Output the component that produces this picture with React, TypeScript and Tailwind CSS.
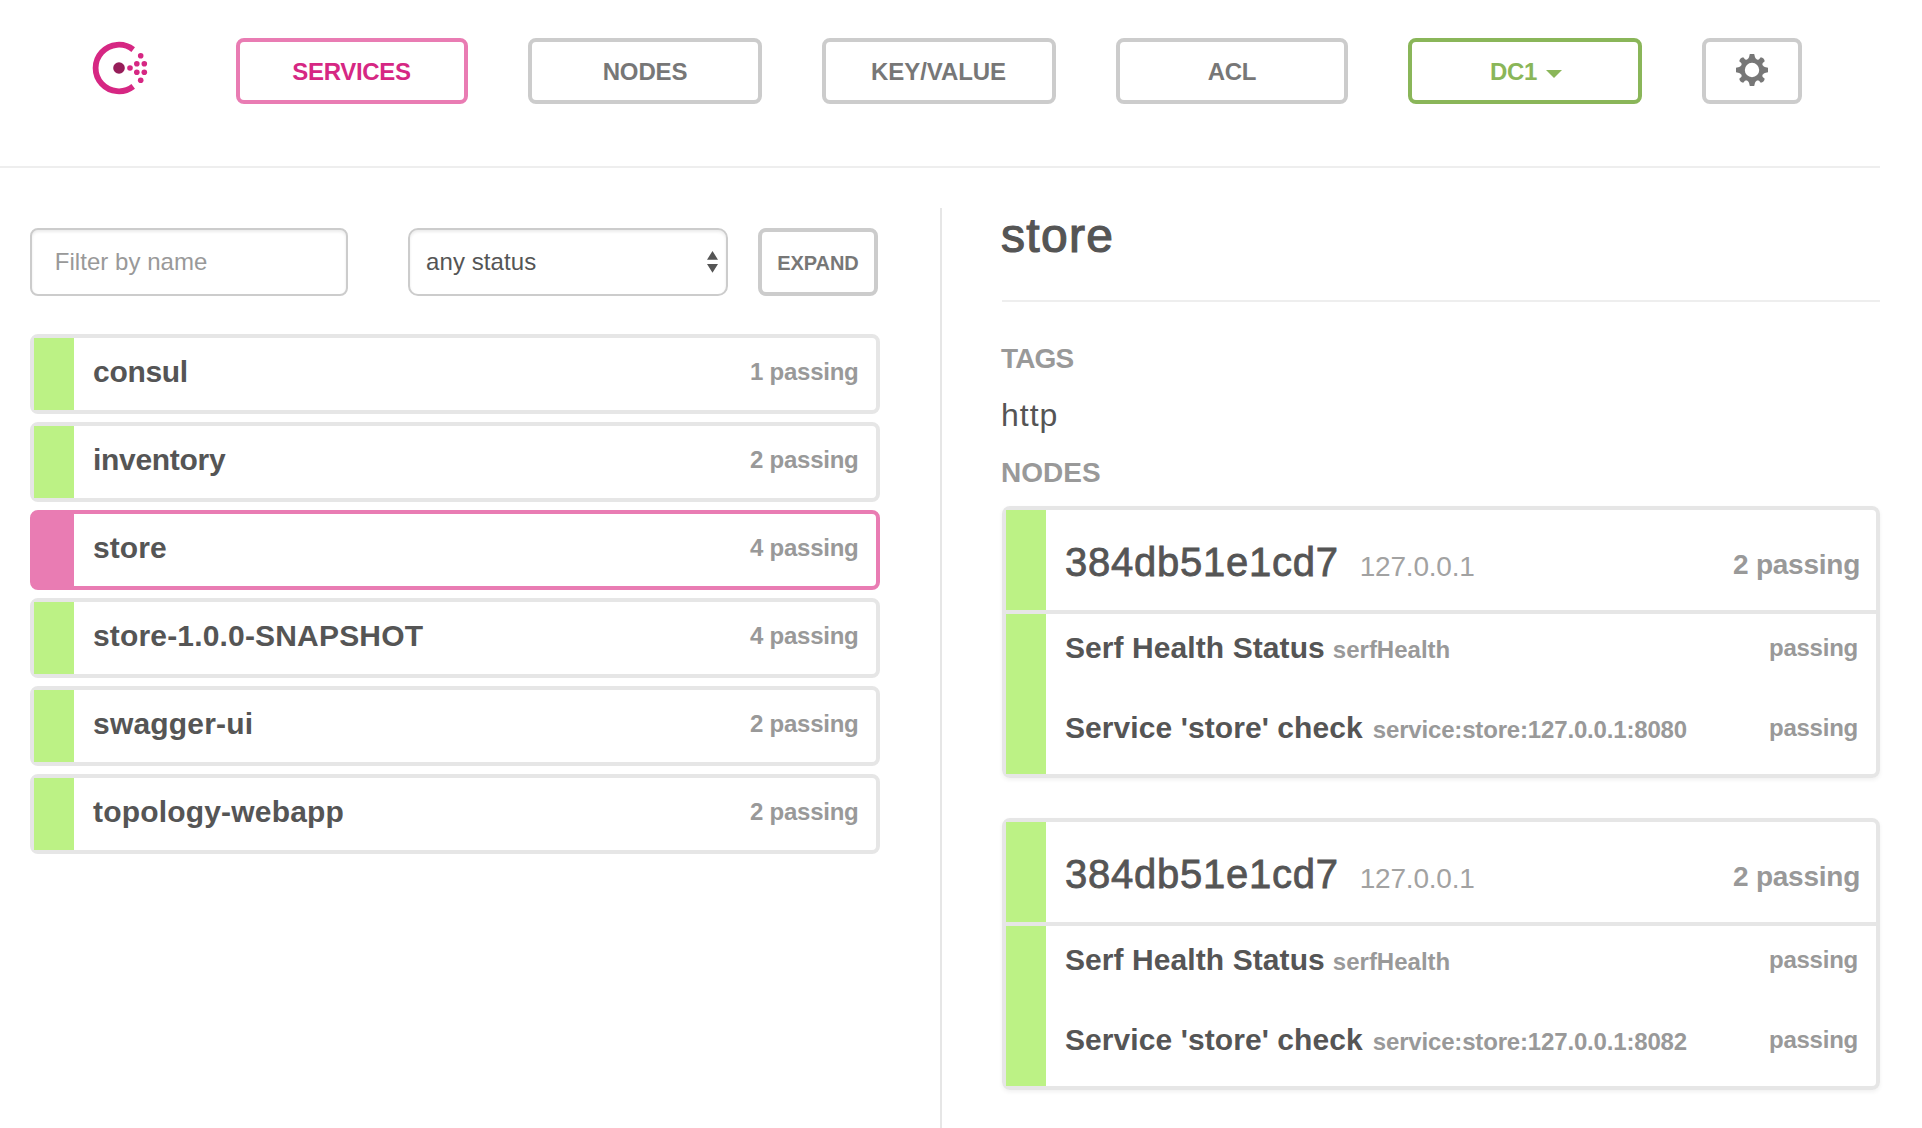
import type { ReactNode } from "react";

type Service = {
  name: string;
  status: string;
  tracking: string;
  selected?: boolean;
};

const services: Service[] = [
  { name: "consul", status: "1 passing", tracking: "tracking-[-0.3px]" },
  { name: "inventory", status: "2 passing", tracking: "tracking-[-0.3px]" },
  { name: "store", status: "4 passing", tracking: "tracking-[0.08px]", selected: true },
  { name: "store-1.0.0-SNAPSHOT", status: "4 passing", tracking: "tracking-[0.17px]" },
  { name: "swagger-ui", status: "2 passing", tracking: "tracking-[0.2px]" },
  { name: "topology-webapp", status: "2 passing", tracking: "tracking-[0.18px]" },
];

function Logo() {
  const dots = [
    [11, 0],
    [17.8, -4.2],
    [17.8, 4.3],
    [25.3, -4.3],
    [25.3, 4.3],
    [21.7, -12.3],
    [21.7, 12.3],
  ];
  return (
    <svg className="ml-[89px] mt-[38px] block h-[60px] w-[60px]" viewBox="-30 -30 60 60">
      <path d="M14.2 -18.4A23.3 23.3 0 1 0 14.2 18.4" fill="none" stroke="#d62783" strokeWidth="5.8" />
      <circle r="5.8" fill="#961d59" />
      {dots.map(([x, y]) => (
        <circle key={`${x},${y}`} cx={x} cy={y} r="2.8" fill="#d62783" />
      ))}
    </svg>
  );
}

function Gear() {
  return (
    <svg className="block h-8 w-8" viewBox="-16 -16 32 32" fill="#777777">
      <path
        fillRule="evenodd"
        d="M0 -11.6A11.6 11.6 0 1 1 0 11.6A11.6 11.6 0 1 1 0 -11.6ZM0 -7.2A7.2 7.2 0 1 0 0 7.2A7.2 7.2 0 1 0 0 -7.2Z"
      />
      {[0, 90, 180, 270].map((a) => (
        <g key={a} transform={`rotate(${a})`}>
          <path d="M-2.2 -16H2.2L3 -12.8Q3.5 -11.4 5 -10.6H-5Q-3.5 -11.4 -3 -12.8Z" />
          <g transform="rotate(45)">
            <path d="M-2.8 -15.2Q0 -17.2 2.8 -15.2L2.6 -12.6Q3 -11.2 4.2 -10.4H-4.2Q-3 -11.2 -2.6 -12.6Z" />
          </g>
        </g>
      ))}
    </svg>
  );
}

function NavButton({ className, children }: { className: string; children: ReactNode }) {
  return (
    <button
      className={`mt-[38px] flex h-[66px] shrink-0 items-center justify-center rounded-lg border-4 pt-px text-[24px] font-bold leading-[28px] ${className}`}
    >
      {children}
    </button>
  );
}

function ServiceItem({ service }: { service: Service }) {
  return (
    <li
      className={`flex h-20 rounded-lg border-4 ${service.selected ? "border-[#e97cb3]" : "border-[#e6e6e6]"}`}
    >
      <div className={`w-10 shrink-0 ${service.selected ? "bg-[#e97cb3]" : "bg-[#bcf285]"}`} />
      <div className="flex h-[67px] flex-1 justify-between pl-[19px] pr-[17.5px] font-bold leading-[67px]">
        <span className={`text-[30px] ${service.tracking}`}>{service.name}</span>
        <span className="text-[24px] tracking-[-0.25px] text-[#999999]">{service.status}</span>
      </div>
    </li>
  );
}

function CheckRow({ name, id, idClass }: { name: string; id: string; idClass: string }) {
  return (
    <div className="flex h-20 items-start justify-between pl-[19px] pr-[18px] font-bold leading-[67px]">
      <div className="flex items-baseline">
        <span className="text-[30px] tracking-[0.08px]">{name}</span>
        <span className={`text-[24px] text-[#999999] ${idClass}`}>{id}</span>
      </div>
      <span className="text-[24px] tracking-[-0.24px] text-[#999999]">passing</span>
    </div>
  );
}

function NodeCard({ port }: { port: string }) {
  return (
    <section className="rounded-lg border-4 border-[#e6e6e6] shadow-[0_2px_4px_rgba(0,0,0,0.06)]">
      <div className="flex h-[100px]">
        <div className="w-10 shrink-0 bg-[#bcf285]" />
        <div className="flex flex-1 items-start justify-between pl-[19px] pr-4">
          <div className="flex items-baseline leading-[104px]">
            <span className="text-[40px] tracking-[0.75px] [-webkit-text-stroke:0.8px_#555555]">384db51e1cd7</span>
            <span className="ml-[21px] text-[28px] tracking-[-0.2px] text-[#a2a2a2]">127.0.0.1</span>
          </div>
          <span className="text-[28px] font-bold leading-[109px] tracking-[-0.25px] text-[#999999]">2 passing</span>
        </div>
      </div>
      <div className="flex border-t-4 border-[#e6e6e6]">
        <div className="w-10 shrink-0 bg-[#bcf285]" />
        <div className="flex-1">
          <CheckRow name="Serf Health Status" id="serfHealth" idClass="ml-[8px]" />
          <CheckRow
            name="Service 'store' check"
            id={`service:store:127.0.0.1:${port}`}
            idClass="ml-[10px] tracking-[-0.17px]"
          />
        </div>
      </div>
    </section>
  );
}

export default function App() {
  return (
    <div className="h-[1128px] w-[1922px] overflow-hidden bg-white font-['Liberation_Sans',Arial,sans-serif] text-[#555555]">
      <header className="flex h-[168px] w-[1880px] border-b-2 border-[#eeeeee]">
        <Logo />
        <NavButton className="ml-[87px] w-[232px] border-[#e97cb3] pr-px tracking-[-0.3px] text-[#d62783]">SERVICES</NavButton>
        <NavButton className="ml-[60px] w-[234px] border-[#cccccc] tracking-[-0.13px] text-[#777777]">NODES</NavButton>
        <NavButton className="ml-[60px] w-[234px] border-[#cccccc] pr-px tracking-[-0.08px] text-[#777777]">KEY/VALUE</NavButton>
        <NavButton className="ml-[60px] w-[232px] border-[#cccccc] tracking-[-0.3px] text-[#777777]">ACL</NavButton>
        <NavButton className="ml-[60px] w-[234px] border-[#8ab659] pl-[2px] tracking-[-0.4px] text-[#8ab659]">
          DC1
          <svg className="ml-[9px] mt-[5px] block h-2 w-4" viewBox="0 0 16 8">
            <path d="M0 0H16L8 8Z" fill="#8ab659" />
          </svg>
        </NavButton>
        <NavButton className="ml-[60px] w-[100px] border-[#cccccc] pb-[3px]">
          <Gear />
        </NavButton>
      </header>

      <main className="flex pt-10">
        <div className="h-[920px] w-[942px] shrink-0 border-r-2 border-[#e6e6e6] pl-[30px] pt-5">
          <div className="flex">
            <input
              placeholder="Filter by name"
              className="h-[68px] w-[318px] rounded-lg border-2 border-[#cccccc] pb-px pl-[22.7px] text-[24px] tracking-[0.05px] shadow-[inset_0_2px_3px_rgba(0,0,0,0.08)] outline-none placeholder:text-[#999999]"
            />
            <div className="ml-[60px] flex h-[68px] w-80 items-center justify-between rounded-[10px] border-2 border-[#cccccc] pb-px pl-4 pr-[8px] text-[24px] tracking-[0.09px] shadow-[inset_0_2px_3px_rgba(0,0,0,0.08)]">
              <span>any status</span>
              <svg className="mt-px block h-[22px] w-[11px]" viewBox="0 0 11 22" fill="#555555">
                <path d="M5.5 0L11 8.7H0ZM0 13.1H11L5.5 21.8Z" />
              </svg>
            </div>
            <button className="ml-[30px] flex h-[68px] w-[120px] items-center justify-center rounded-lg border-4 border-[#cccccc] pt-[2px] text-[20px] font-bold tracking-[-0.08px] text-[#777777]">
              EXPAND
            </button>
          </div>
          <ul className="mt-[38px] flex w-[850px] flex-col gap-2">
            {services.map((s) => (
              <ServiceItem key={s.name} service={s} />
            ))}
          </ul>
        </div>

        <div className="ml-[60px] w-[878px]">
          <h1 className="-ml-px text-[48px] leading-[55px] tracking-[1.3px] [-webkit-text-stroke:1.2px_#555555]">store</h1>
          <hr className="mt-[37px] border-0 border-t-2 border-[#eeeeee]" />
          <h2 className="-ml-px mt-10 text-[28px] font-bold leading-[33px] tracking-[-0.84px] text-[#999999]">TAGS</h2>
          <p className="-ml-px mt-[23px] text-[32px] leading-[34px] tracking-[1px]">http</p>
          <h2 className="-ml-px mt-6 text-[28px] font-bold leading-[33px] text-[#999999]">NODES</h2>
          <div className="mt-[17px] flex flex-col gap-10">
            <NodeCard port="8080" />
            <NodeCard port="8082" />
          </div>
        </div>
      </main>
    </div>
  );
}
